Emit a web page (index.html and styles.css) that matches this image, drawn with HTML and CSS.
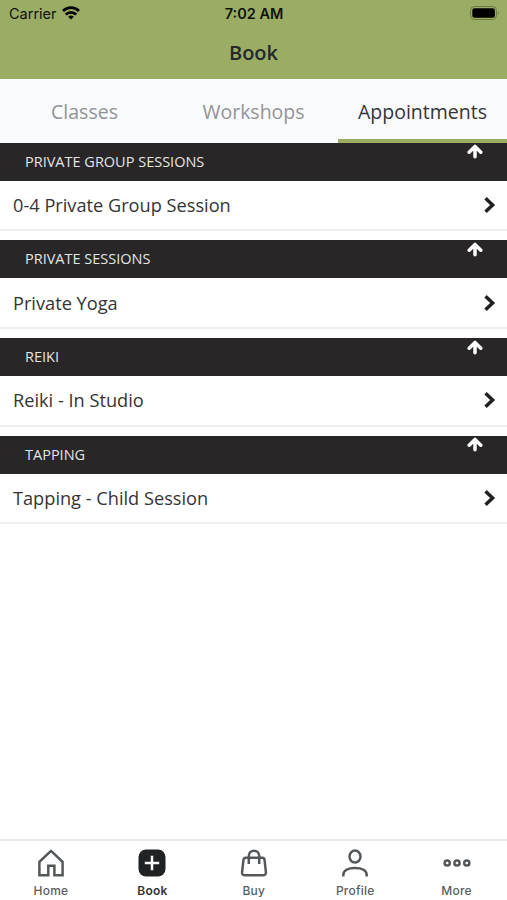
FILE: index.html
```html
<!DOCTYPE html>
<html lang="en">
	<head>
		<meta charset="UTF-8">
		<meta name="viewport" content="width=device-width, initial-scale=1">
		<title>Book</title>
		<link rel="stylesheet" href="styles.css">
	</head>
	<body>
		<!-- shared icons -->
		<svg class="defs">
			<symbol id="up" viewBox="0 0 16 15">
				<path d="M8 12.7V3M2.2 8.2L8 2.4l5.8 5.8" fill="none" stroke="currentColor" stroke-width="3.5" stroke-linecap="round" stroke-linejoin="round"/>
			</symbol>
			<symbol id="right" viewBox="0 0 12 16">
				<path d="M2.8 2.5L8.6 8l-5.8 5.5" fill="none" stroke="currentColor" stroke-width="3.5" stroke-linecap="square"/>
			</symbol>
		</svg>
		<div class="wrap">
			<div class="top">
				<div class="status">
					<div class="carrier">
						<span>Carrier</span>
						<svg width="18" height="14" viewBox="0 0 18 14">
							<g fill="none" stroke="#000" stroke-width="2.7">
								<path d="M1 4.9a11.6 11.6 0 0 1 16 0"/>
								<path d="M3.8 8.5a7.4 7.4 0 0 1 10.4 0"/>
							</g>
							<path d="M9 13.4L6.2 10.7a4.1 4.1 0 0 1 5.6 0z"/>
						</svg>
					</div>
					<strong>7:02 AM</strong>
					<svg class="battery" width="30" height="14" viewBox="0 0 30 14">
						<rect x=".5" y=".5" width="26" height="13" rx="4" fill="none" stroke="#6b783f"/>
						<rect x="2.3" y="2.3" width="22.6" height="9.4" rx="2.2"/>
						<path d="M28 5q1.8 2 0 4z" fill="#6b783f"/>
					</svg>
				</div>
				<h1>Book</h1>
			</div>
			<ul class="tabs">
				<li>Classes</li>
				<li>Workshops</li>
				<li class="active">Appointments</li>
			</ul>
			<div class="list">
				<div class="group">
					<h2><span>PRIVATE GROUP SESSIONS</span><svg><use href="#up"/></svg></h2>
					<p><span>0-4 Private Group Session</span><svg><use href="#right"/></svg></p>
				</div>
				<div class="group">
					<h2><span>PRIVATE SESSIONS</span><svg><use href="#up"/></svg></h2>
					<p><span>Private Yoga</span><svg><use href="#right"/></svg></p>
				</div>
				<div class="group">
					<h2><span>REIKI</span><svg><use href="#up"/></svg></h2>
					<p><span>Reiki - In Studio</span><svg><use href="#right"/></svg></p>
				</div>
				<div class="group">
					<h2><span>TAPPING</span><svg><use href="#up"/></svg></h2>
					<p><span>Tapping - Child Session</span><svg><use href="#right"/></svg></p>
				</div>
			</div>
			<ul class="nav">
				<li>
					<svg viewBox="0 0 28 28">
						<path d="M2.4 26.2V12.8L14 1.9l11.6 10.9v13.4h-8.2v-9.5h-6.1v9.5z"/>
					</svg>
					<span>Home</span>
				</li>
				<li class="active">
					<svg viewBox="0 0 28 28">
						<rect class="fill" x=".5" y=".5" width="27" height="27" rx="7.5"/>
						<path class="plus" d="M14 6.8v14.4M6.8 14h14.4"/>
					</svg>
					<span>Book</span>
				</li>
				<li>
					<svg viewBox="0 0 28 28">
						<path d="M5.7 8.8h16.6q1.9 0 2.2 1.9l1.4 12.3q.3 3.3-3 3.3H5.1q-3.3 0-3-3.3l1.4-12.3q.3-1.9 2.2-1.9z"/>
						<path d="M8.8 15V6.9a5.2 5.2 0 0 1 10.4 0V15"/>
					</svg>
					<span>Buy</span>
				</li>
				<li>
					<svg viewBox="0 0 28 28">
						<ellipse cx="14" cy="7.6" rx="5.5" ry="6"/>
						<path d="M2.3 27.4v-1.5c0-4.3 4.5-7 11.7-7s11.7 2.7 11.7 7v1.5"/>
					</svg>
					<span>Profile</span>
				</li>
				<li>
					<svg viewBox="0 0 28 28">
						<circle cx="4.2" cy="14" r="2.6"/>
						<circle cx="14" cy="14" r="2.6"/>
						<circle cx="23.8" cy="14" r="2.6"/>
					</svg>
					<span>More</span>
				</li>
			</ul>
		</div>
	</body>
</html>
```
FILE: styles.css
```css
body,ul,h1,h2,p{
	margin: 0;
	padding: 0;
	list-style: none;
}
.defs{
	display: none;
}
.wrap{
	height: 900px;
	display: flex;
	flex-direction: column;
	background: #fff;
	color: #29292b;
	font-family: "Open Sans", sans-serif;
}
.top{
	height: 79.4px;
	background: #9bac65;
}
.status{
	height: 27px;
	padding: 0 7px 0 9px;
	display: grid;
	grid-template-columns: 1fr auto 1fr;
	align-items: center;
	color: #10130b;
	font: 14.5px/27px Inter, sans-serif;
}
.status strong{
	margin-right: 1px;
	font-weight: 600;
}
.carrier{
	display: flex;
	align-items: center;
	gap: 5px;
}
.carrier svg{
	margin-top: -2px;
}
.battery{
	justify-self: end;
	margin-top: -1px;
}
.top h1{
	text-align: center;
	font: 600 20px/52px "Open Sans", sans-serif;
	color: #24282a;
}
.tabs{
	height: 63.2px;
	display: flex;
	background: #f9fafc;
}
.tabs li{
	flex: 1;
	box-sizing: border-box;
	border-bottom: 4px solid transparent;
	text-align: center;
	font-size: 19.5px;
	line-height: 65px;
	color: #929398;
}
.tabs .active{
	border-color: #9bac65;
	color: #343437;
}
.list{
	flex: 1;
}
.group{
	height: 97.75px;
}
.group h2{
	height: 38px;
	padding: 0 24px 0 25px;
	display: flex;
	justify-content: space-between;
	background: #282627;
	color: #e4e4e4;
	font-size: 14.5px;
	font-weight: 400;
	line-height: 37px;
}
.group h2 svg{
	width: 16px;
	height: 15px;
	margin-top: 1.5px;
	color: #fff;
}
.group p{
	height: 48.6px;
	padding: 0 11px 0 13px;
	display: flex;
	align-items: center;
	justify-content: space-between;
	border-bottom: 2px solid #efefef;
	font-size: 18.2px;
	color: #343436;
}
.group p svg{
	width: 12px;
	height: 16px;
	color: #202022;
}
.nav{
	height: 59px;
	display: flex;
	border-top: 2px solid #e8e8e8;
}
.nav li{
	flex: 1;
	display: flex;
	flex-direction: column;
	align-items: center;
	padding: 8px 0 0 .5px;
	font: 500 12px/16px Inter, sans-serif;
	letter-spacing: .2px;
	color: #5c5e61;
}
.nav svg{
	width: 28px;
	height: 28px;
	margin-bottom: 6px;
	fill: none;
	stroke: #55585b;
	stroke-width: 2.5;
}
.nav .active{
	font-weight: 600;
	color: #343537;
}
.nav .fill{
	fill: #202224;
	stroke: none;
}
.nav .plus{
	stroke: #fff;
}
```
